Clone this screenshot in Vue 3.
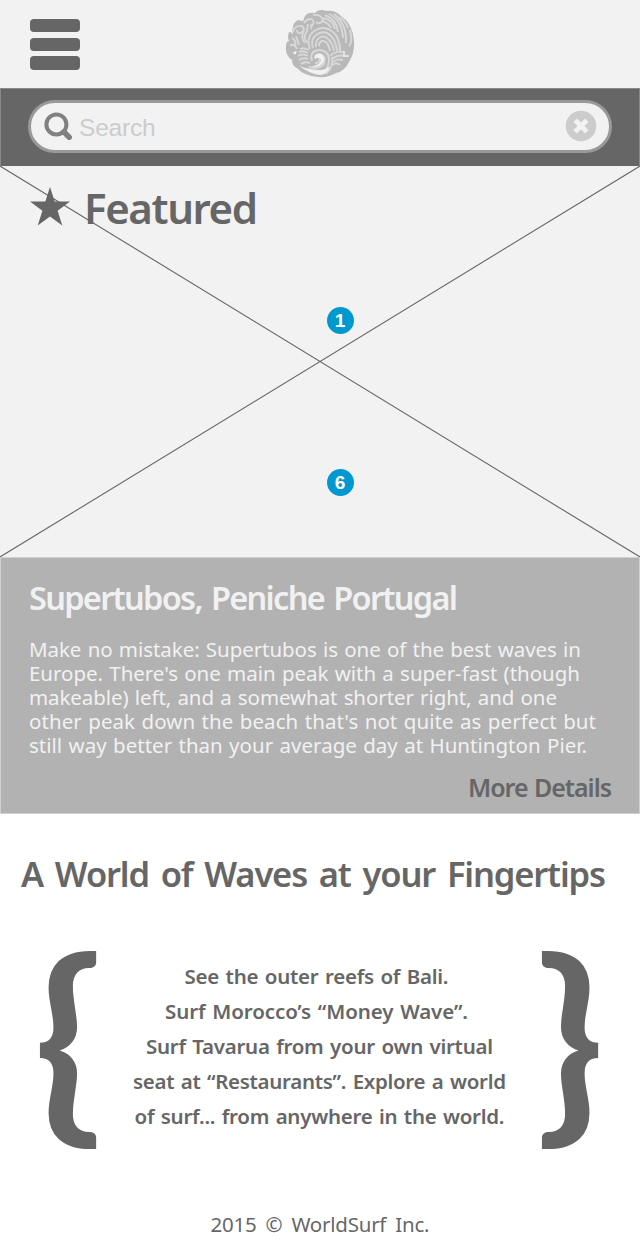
<script setup>
const body = [
  { text: 'Make no mistake: Supertubos is one of the best waves in', width: 552 },
  { text: "Europe. There's one main peak with a super-fast (though", width: 551 },
  { text: 'makeable) left, and a somewhat shorter right, and one', width: 528 },
  { text: "other peak down the beach that's not quite as perfect but", width: 567 },
  { text: 'still way better than your average day at Huntington Pier.', width: 558 },
]
const quote = [
  { text: 'See the outer reefs of Bali.', width: 264, trail: true },
  { text: 'Surf Morocco’s “Money Wave”.', width: 303, trail: true },
  { text: 'Surf Tavarua from your own virtual', width: 347 },
  { text: 'seat at “Restaurants”. Explore a world', width: 373 },
  { text: 'of surf... from anywhere in the world.', width: 370 },
]

// Tracks a line of text so that it spans the given width in pixels.
const vTrack = {
  mounted(el, { value }) {
    const natural = el.getBoundingClientRect().width
    const step = (value - natural) / (el.textContent.length - 1)
    el.style.letterSpacing = `${step}px`
    el.style.marginRight = `${-step}px`
  },
}
</script>

<template>
  <main class="page">
    <header class="top">
      <div class="menu"><i></i><i></i><i></i></div>
      <svg class="logo" viewBox="0 0 70 70">
        <path class="disc" d="M4 23 8 24Q6 15 13 11L18 12Q20 2 30 4Q34-1 42 2Q50 1 56 7Q68 15 69 32Q70 44 64 53Q60 62 51 64Q43 69 33 68Q19 67 12 59Q7 57 7 51Q0 46 1 38Q1 32 4 32Q2 28 4 23Z" />
        <g class="curl">
          <path d="M25 40Q21 29 28 23Q38 15 48 23Q55 29 55 42" />
          <path d="M28 39Q25 31 31 26Q39 20 46 27Q51 32 52 42" />
          <path d="M31 38Q30 32 34 29Q39 25 44 31Q48 35 49 42" />
          <path d="M34 37Q34 32 38 32Q43 32 45 42" />
          <path d="M30 50Q29 45 35 45Q42 47 39 55Q34 61 24 58" />
          <path d="M27 52Q24 43 33 41Q44 41 44 51Q44 60 36 65" />
          <path d="M47 48Q49 57 41 65M34 49Q36 54 30 54" />
          <path d="M24 41Q19 38 15 40M23 44Q18 41 14 43M23 47Q17 44 13 47M23 50Q18 48 14 51M25 54Q19 52 16 55" />
          <path d="M45 47Q49 42 58 43M47 50Q53 45 60 47M48 53Q53 49 58 51M47 56Q52 53 55 56" />
          <path d="M40 6Q52 11 53 23M44 5Q57 11 58 29M49 5Q62 15 61 34M38 9Q48 11 50 20M36 12Q43 13 46 19" />
          <path d="M23 34Q17 30 22 22L23 15M20 34Q15 29 19 20M26 20 27 15" />
          <path d="M7 25Q9 16 17 17Q21 21 16 24Q12 25 12 21M19 14Q23 8 28 11Q30 16 25 17M28 6Q36 5 38 11Q35 16 31 13" />
          <path d="M11 27 14 36M7 29Q12 32 10 37M5 36Q10 35 12 40M65 21Q68 34 64 37M54 8Q60 11 63 19" />
        </g>
        <path class="foam" d="M14 57Q25 61 36 61Q42 60 45 57Q43 66 34 66Q24 64 14 57ZM30 50Q29 44 36 45Q41 48 38 54Q33 60 26 57Q34 57 36 51Q34 47 30 50ZM8 44Q10 41 12 43Q11 43 11 45Q9 46 8 44Z" />
        <path class="mark" d="M58 42H60V46H64V48H58Z" />
      </svg>
      <div class="side"></div>
    </header>

    <section class="searchbar">
      <div class="field">
        <svg class="lens" viewBox="0 0 30 30">
          <circle cx="12.4" cy="12.4" r="10" />
          <path d="M20 20 25.2 25.2" />
        </svg>
        <span class="placeholder">Search</span>
        <svg class="clear" viewBox="0 0 32 32">
          <circle cx="16" cy="16" r="15.3" />
          <path d="M10.2 10.2 21.8 21.8M21.8 10.2 10.2 21.8" />
        </svg>
      </div>
    </section>

    <section class="hero">
      <svg class="cross" viewBox="0 0 640 391"><path d="M0 0 640 391M640 0 0 391" /></svg>
      <h1 class="featured">
        <svg class="star" viewBox="0 0 40 39"><path d="M20 0 24.7 14.6H40L27.6 23.8 32.3 38.5 20 29.5 7.7 38.5 12.4 23.8 0 14.6H15.3Z" /></svg>
        <span v-track="174">Featured</span>
      </h1>
      <b class="badge one">1</b>
      <b class="badge six">6</b>
    </section>

    <section class="card">
      <h2><span v-track="429">Supertubos, Peniche Portugal</span></h2>
      <div class="copy">
        <div v-for="l in body" :key="l.text"><span v-track="l.width">{{ l.text }}</span></div>
      </div>
      <a class="more"><span v-track="144">More Details</span></a>
    </section>

    <h2 class="tagline"><span v-track="585">A World of Waves at your Fingertips</span></h2>

    <section class="quote">
      <b class="brace">{</b>
      <div class="lines">
        <div v-for="l in quote" :key="l.text" :class="{ trail: l.trail }"><span v-track="l.width">{{ l.text }}</span></div>
      </div>
      <b class="brace">}</b>
    </section>

    <footer><span v-track="219">2015 © WorldSurf Inc.</span></footer>
  </main>
</template>

<style>
body { margin: 0; background: #fff; }
</style>

<style scoped>
* { box-sizing: border-box; }
.page { width: 640px; height: 1260px; overflow: hidden; background: #fff; color: #666; font-family: "Noto Sans", "Liberation Sans", sans-serif; }
h1, h2 { margin: 0; font-weight: 600; }
span { display: inline-block; white-space: nowrap; }
svg { display: block; flex: none; }
.top { height: 88px; background: #f2f2f2; display: flex; justify-content: space-between; padding: 0 30px; }
.menu, .side { width: 50px; }
.menu { display: flex; flex-direction: column; gap: 5.4px; padding-top: 19px; }
.menu i { height: 13.3px; border-radius: 4px; background: #666; }
.logo { width: 70px; height: 70px; margin-top: 9px; }
.disc { fill: #b9b9b9; }
.curl { fill: none; stroke: #d8d8d8; stroke-width: 1.9; }
.foam { fill: #f1f1f1; }
.mark { fill: #e2e2e2; }
.searchbar { height: 78px; background: #666; border: 1px solid #8a8a8a; border-width: 1px 1px 0; padding: 11px 27px 0 26.5px; }
.field { height: 53px; border: 3px solid #999; border-radius: 27px; background: #f2f2f2; display: flex; align-items: center; padding: 0 12px 0 13.5px; }
.lens { width: 30px; height: 30px; margin-top: 1px; }
.lens circle, .lens path { fill: none; stroke: #808080; stroke-width: 4; stroke-linecap: round; }
.lens path { stroke-width: 5.5; }
.placeholder { flex: 1; margin: 3px 0 0 5px; color: #ccc; font: 24.5px/30px "Liberation Sans", sans-serif; letter-spacing: -.2px; }
.clear { width: 32px; height: 32px; margin-bottom: 2px; }
.clear circle { fill: #ccc; }
.clear path { stroke: #f2f2f2; stroke-width: 4.8; }
.hero { position: relative; height: 391px; background: #f2f2f2; }
.cross { position: absolute; inset: 0; width: 640px; height: 391px; }
.cross path { stroke: #666; stroke-width: 1.1; }
.featured { position: relative; display: flex; padding: 13px 0 0 30px; font-size: 42px; line-height: 57px; }
.star { width: 40px; height: 39px; margin: 8px 14px 0 0; fill: #666; }
.badge { position: absolute; left: 326.5px; width: 27px; height: 27px; border-radius: 50%; background: #0099cf; color: #fff; font: bold 19px/28px "Liberation Sans", sans-serif; text-align: center; }
.one { top: 141px; }
.six { top: 303px; }
.card { height: 257px; background: #b2b2b2; border: 1px solid #d0d0d0; padding: 18px 27px 0 29px; color: #f1f1f1; }
.card h2 { height: 44px; margin-left: -1px; font-size: 32.5px; line-height: 44px; word-spacing: 2.5px; }
.copy { margin: 17px 0 0 -1px; font-size: 20.5px; line-height: 24px; word-spacing: 1px; }
.more { display: flex; justify-content: flex-end; margin-top: 13px; color: #666; font-size: 25px; font-weight: 600; line-height: 34px; word-spacing: 1px; }
.tagline { margin: 36px 0 0 21px; font-size: 34.5px; font-weight: 590; line-height: 48px; word-spacing: 4px; }
.quote { display: flex; justify-content: space-between; height: 198px; margin: 52px 41px 0 39px; }
.brace { display: flex; justify-content: center; width: 58px; height: 198px; font: bold 213px/167px Lato, sans-serif; transform: scaleX(1.06); }
.lines { padding: 9px 0 0 1px; text-align: center; font-size: 20.5px; font-weight: 580; line-height: 35px; word-spacing: 1.5px; }
.trail { padding-right: 6px; }
footer { margin-top: 62px; text-align: center; font-size: 20.5px; line-height: 28px; word-spacing: 4px; }
</style>
